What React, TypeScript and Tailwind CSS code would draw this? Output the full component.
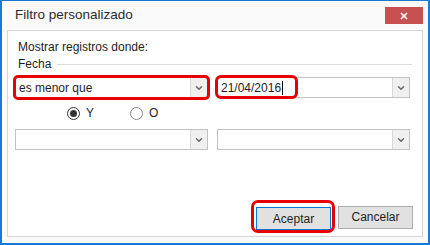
import { ChevronDown, X } from 'lucide-react';

function Combo({ value, caret }: { value?: string; caret?: boolean }) {
  return (
    <div className="flex h-[21px] w-[193px] items-stretch border border-[#c3c3c3] bg-white">
      <div className="flex flex-1 items-center px-[3px] text-[12px] text-[#1e1e1e]">
        <span>{value}</span>
        {caret && <span className="ml-px h-[14px] w-px bg-black" />}
      </div>
      <div className="flex w-[17px] items-center justify-center border-l border-[#d9d9d9] bg-[#f0f0f0]">
        <ChevronDown className="h-[10px] w-[10px] text-[#666]" strokeWidth={3.5} />
      </div>
    </div>
  );
}

function Radio({ label, checked }: { label: string; checked?: boolean }) {
  return (
    <div className="flex items-center gap-[6px] text-[12px] text-[#1e1e1e]">
      <span
        className={
          checked
            ? 'flex h-[13px] w-[13px] items-center justify-center rounded-full border border-[#333] bg-white'
            : 'flex h-[13px] w-[13px] items-center justify-center rounded-full border border-[#8a8a8a] bg-white'
        }
      >
        {checked && <span className="h-[7px] w-[7px] rounded-full bg-[#333]" />}
      </span>
      <span>{label}</span>
    </div>
  );
}

export default function App() {
  return (
    <div
      className="flex h-[245px] w-[430px] flex-col border-2 border-t border-[#1a79d2] bg-[#fafafa]"
      style={{ fontFamily: '"Liberation Sans", Arial, sans-serif' }}
    >
      <div className="flex h-[29px] items-center justify-between pl-[13px] pr-[5px]">
        <span className="text-[13.5px] text-[#2b2b2b]">Filtro personalizado</span>
        <button className="flex h-[17px] w-[38px] items-center justify-center bg-[#c75050]">
          <X className="h-[10px] w-[10px] text-white" strokeWidth={4} />
        </button>
      </div>

      <div className="mx-[5px] mb-[6px] flex flex-1 flex-col border border-[#d5d5d5] bg-white px-[7px] pt-[9px] pb-[6px]">
        <p className="ml-[3px] text-[12px] leading-[15px] text-[#1e1e1e]">Mostrar registros donde:</p>
        <div className="mt-[2px] flex items-center gap-[6px] pr-[3px] pl-[3px]">
          <span className="text-[12px] leading-[15px] text-[#1e1e1e]">Fecha</span>
          <div className="h-px flex-1 bg-[#dcdcdc]" />
        </div>

        <div className="mt-[5px] flex gap-[9px]">
          <div className="relative">
            <Combo value="es menor que" />
            <div className="absolute -inset-[2px] rounded-[5px] border-[3px] border-[#e60000]" />
          </div>
          <div className="relative">
            <Combo value="21/04/2016" caret />
            <div className="absolute -left-[2px] -top-[2px] h-[24px] w-[83px] rounded-[6px] border-[3px] border-[#e60000]" />
          </div>
        </div>

        <div className="mt-[8px] flex h-[14px] items-center pl-[52px]">
          <div className="w-[63px]">
            <Radio label="Y" checked />
          </div>
          <Radio label="O" />
        </div>

        <div className="mt-[9px] flex gap-[9px]">
          <Combo />
          <Combo />
        </div>

        <div className="flex-1" />

        <div className="flex justify-end gap-[7px] pr-[2px]">
          <div className="relative">
            <button className="h-[23px] w-[75px] border border-[#0078d7] bg-[#e1e1e1] text-[12px] text-[#1e1e1e]">
              Aceptar
            </button>
            <div className="absolute -left-[5px] -top-[6px] -right-[4px] -bottom-[3px] rounded-[7px] border-[3px] border-[#e60000]" />
          </div>
          <button className="h-[23px] w-[75px] border border-[#adadad] bg-[#e1e1e1] text-[12px] text-[#1e1e1e]">
            Cancelar
          </button>
        </div>
      </div>
    </div>
  );
}
